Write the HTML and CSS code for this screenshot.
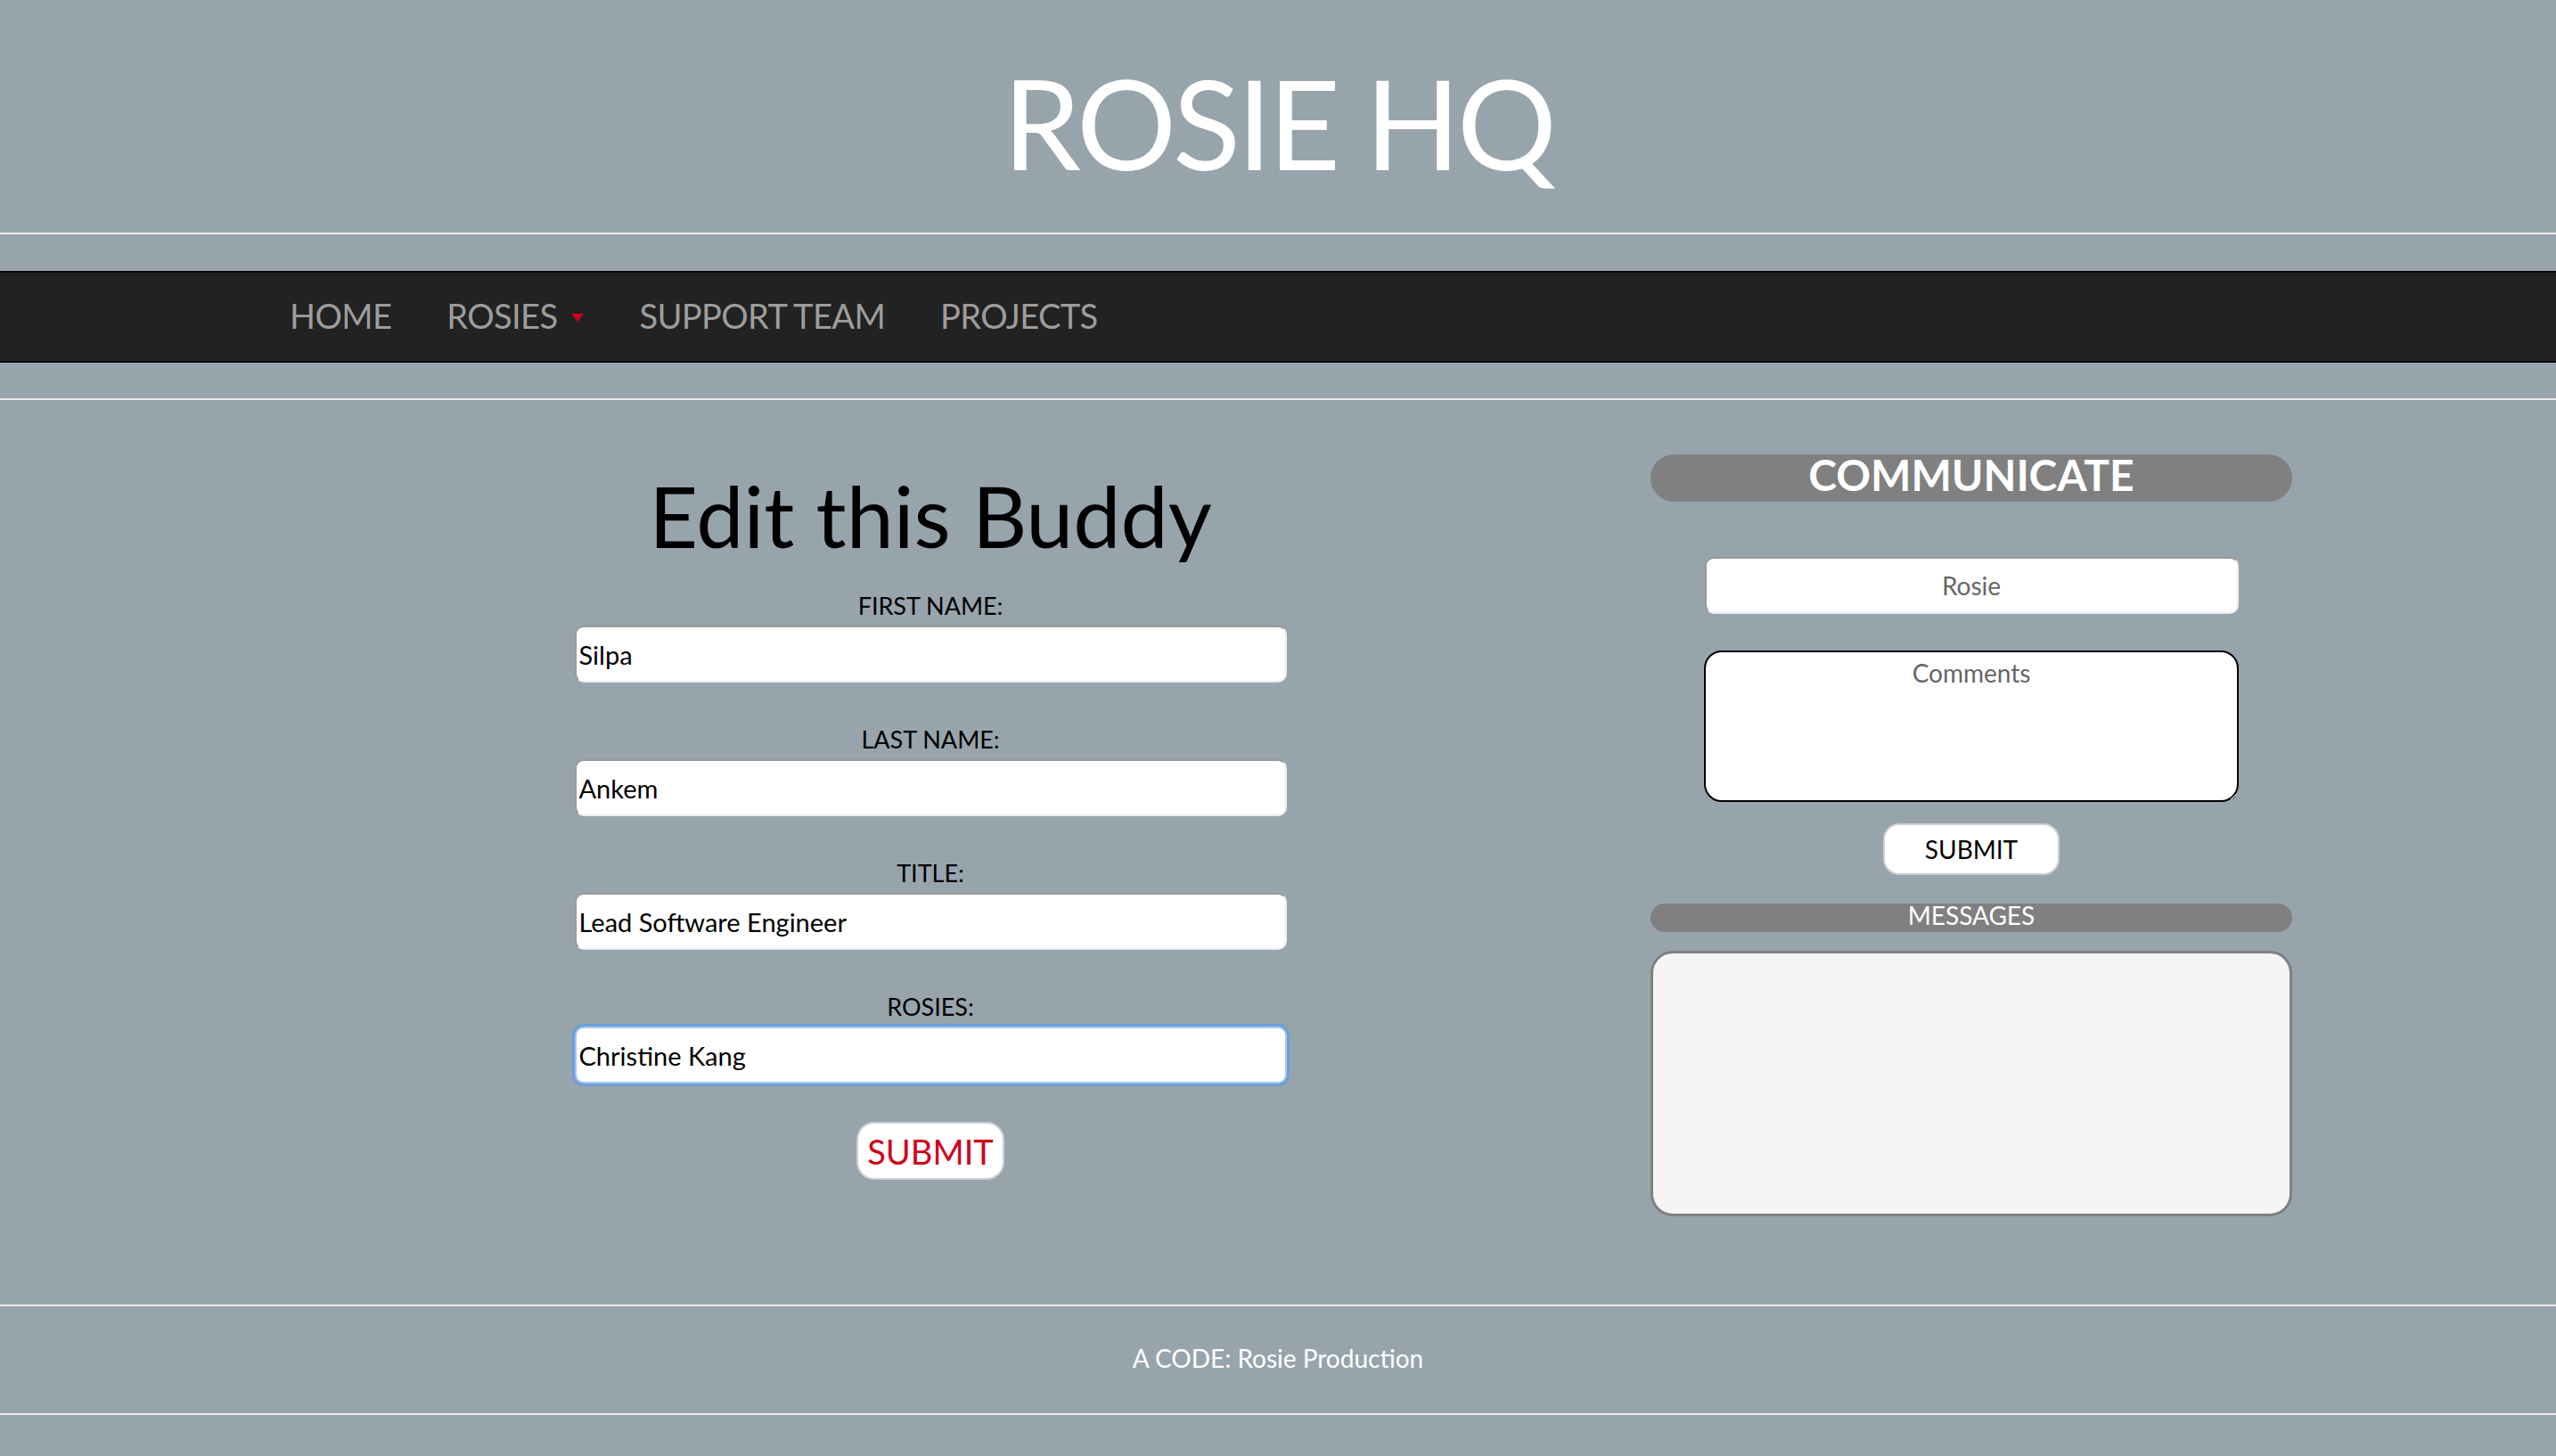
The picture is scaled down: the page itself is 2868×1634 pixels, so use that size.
FILE: index.html
```html
<!DOCTYPE html>
<html lang="en">
<head>
    <meta charset="UTF-8">
    <meta name="viewport" content="width=device-width, initial-scale=1.0">
    <title>Rosie HQ - Edit Buddy</title>
    <link rel="stylesheet" href="styles.css">
</head>
<body>

    <header class="site-header">
        <h1>ROSIE HQ</h1>
    </header>
    <hr class="rule">

    <nav class="navbar">
        <div class="navbar-inner">
            <a href="#" class="nav-link">HOME</a>
            <a href="#" class="nav-link">ROSIES <span class="caret"></span></a>
            <a href="#" class="nav-link">SUPPORT TEAM</a>
            <a href="#" class="nav-link">PROJECTS</a>
        </div>
    </nav>
    <hr class="rule">

    <main class="main">
        <section class="edit-col">
            <h2 class="edit-title">Edit this Buddy</h2>
            <form class="edit-form">
                <div class="field">
                    <label for="firstName">FIRST NAME:</label>
                    <input type="text" id="firstName" value="Silpa">
                </div>
                <div class="field">
                    <label for="lastName">LAST NAME:</label>
                    <input type="text" id="lastName" value="Ankem">
                </div>
                <div class="field">
                    <label for="title">TITLE:</label>
                    <input type="text" id="title" value="Lead Software Engineer">
                </div>
                <div class="field">
                    <label for="rosies">ROSIES:</label>
                    <input type="text" id="rosies" class="focused" value="Christine Kang">
                </div>
                <button type="button" class="btn-submit">SUBMIT</button>
            </form>
        </section>

        <aside class="comm-col">
            <h3 class="comm-title">COMMUNICATE</h3>
            <div class="comm-form">
                <input type="text" class="comm-name" placeholder="Rosie">
                <textarea class="comm-text" placeholder="Comments"></textarea>
                <button type="button" class="btn-small">SUBMIT</button>
            </div>
            <h4 class="messages-title">MESSAGES</h4>
            <div class="messages-box"></div>
        </aside>
    </main>

    <footer class="site-footer">
        <hr class="rule">
        <p class="footer-text">A CODE: Rosie Production</p>
        <hr class="rule">
    </footer>

</body>
</html>
```

FILE: styles.css
```css
body {
    margin: 0;
    padding-bottom: 43px;
    background-color: #98a4ac;
    font-family: Lato, "Open Sans", sans-serif;
    color: #000;
}
.rule {
    margin: 0;
    border: 0;
    border-top: 2px solid #ececec;
    height: 0;
}
.site-header {
    padding: 67px 0 54px;
    text-align: center;
}
.site-header h1 {
    margin: 0;
    font-size: 140px;
    line-height: 1;
    font-weight: 400;
    letter-spacing: -4px;
    color: #fff;
}

/* navbar */
.navbar {
    margin: 41px 0 40px;
    height: 103px;
    box-sizing: border-box;
    background-color: #222;
    border-top: 2px solid #080808;
    border-bottom: 2px solid #080808;
}
.navbar-inner {
    width: 2340px;
    height: 100%;
    margin: 0 auto;
    padding: 0 30px;
    box-sizing: border-box;
    display: flex;
    align-items: center;
}
.nav-link {
    padding: 0 31px 4px;
    font-size: 38px;
    letter-spacing: -0.6px;
    color: #9d9d9d;
    text-decoration: none;
    display: flex;
    align-items: center;
}
.caret {
    width: 0;
    height: 0;
    margin-left: 16px;
    margin-top: 6px;
    border-left: 7px solid transparent;
    border-right: 7px solid transparent;
    border-top: 9px solid #d0021b;
}

/* main layout */
.main {
    width: 2340px;
    margin: 0 auto;
    padding: 61px 0 99px;
    display: grid;
    grid-template-columns: 2fr 1fr;
    align-items: start;
}
.edit-col {
    padding: 0 30px;
}
.comm-col {
    padding: 0 32px 0 28px;
}
.edit-title {
    margin: 21px 0 40px;
    font-size: 95px;
    line-height: 1;
    font-weight: 400;
    text-align: center;
}
.edit-form {
    width: 799px;
    margin: 0 auto;
    display: flex;
    flex-direction: column;
    align-items: center;
}
.field {
    width: 100%;
    margin-bottom: 50px;
}
.field label {
    display: block;
    margin-bottom: 9px;
    font-size: 27px;
    line-height: 1;
    text-align: center;
}
.field input {
    display: block;
    width: 100%;
    height: 64px;
    box-sizing: border-box;
    padding: 0 3px;
    border: 2px solid;
    border-color: #999 #ececec #ececec #999;
    border-radius: 10px;
    background: #fff;
    font-family: inherit;
    font-size: 29px;
    color: #000;
    outline: none;
}
.field input.focused {
    border-color: #a9c8ec;
    box-shadow: 0 0 0 3px #6b9fd9;
}
.btn-submit {
    margin-top: -7px;
    width: 166px;
    height: 65px;
    background: #fff;
    border: 2px solid #cfcfcf;
    border-radius: 20px;
    font-family: inherit;
    font-size: 38px;
    color: #d0021b;
    cursor: pointer;
}

/* communicate panel */
.comm-title {
    margin: 0;
    height: 53px;
    line-height: 45px;
    border-radius: 27px;
    background-color: #808080;
    color: #fff;
    font-size: 48px;
    font-weight: 700;
    text-align: center;
}
.comm-form {
    padding-top: 62px;
    display: flex;
    flex-direction: column;
    align-items: center;
}
.comm-name {
    width: 599px;
    height: 64px;
    box-sizing: border-box;
    border: 2px solid;
    border-color: #999 #ececec #ececec #999;
    border-radius: 10px;
    background: #fff;
    font-family: inherit;
    font-size: 28px;
    text-align: center;
}
.comm-text {
    margin-top: 41px;
    width: 600px;
    height: 170px;
    box-sizing: border-box;
    padding: 6px 10px;
    border: 2px solid #000;
    border-radius: 20px;
    background: #fff;
    font-family: inherit;
    font-size: 28px;
    text-align: center;
}
.comm-name::placeholder, .comm-text::placeholder {
    color: #666;
}
.btn-small {
    margin-top: 24px;
    width: 198px;
    height: 58px;
    background: #fff;
    border: 2px solid #cfcfcf;
    border-radius: 18px;
    font-family: inherit;
    font-size: 28px;
    color: #000;
    cursor: pointer;
}
.messages-title {
    margin: 32px 0 0;
    height: 32px;
    line-height: 27px;
    border-radius: 16px;
    background-color: #808080;
    color: #fff;
    font-size: 28px;
    font-weight: 400;
    text-align: center;
}
.messages-box {
    margin-top: 21px;
    height: 298px;
    box-sizing: border-box;
    background-color: #f5f5f5;
    border: 3px solid #808080;
    border-radius: 25px;
}

/* footer */
.footer-text {
    margin: 0;
    padding: 44px 0 48px;
    font-size: 28px;
    line-height: 1;
    color: #fff;
    text-align: center;
}
```
